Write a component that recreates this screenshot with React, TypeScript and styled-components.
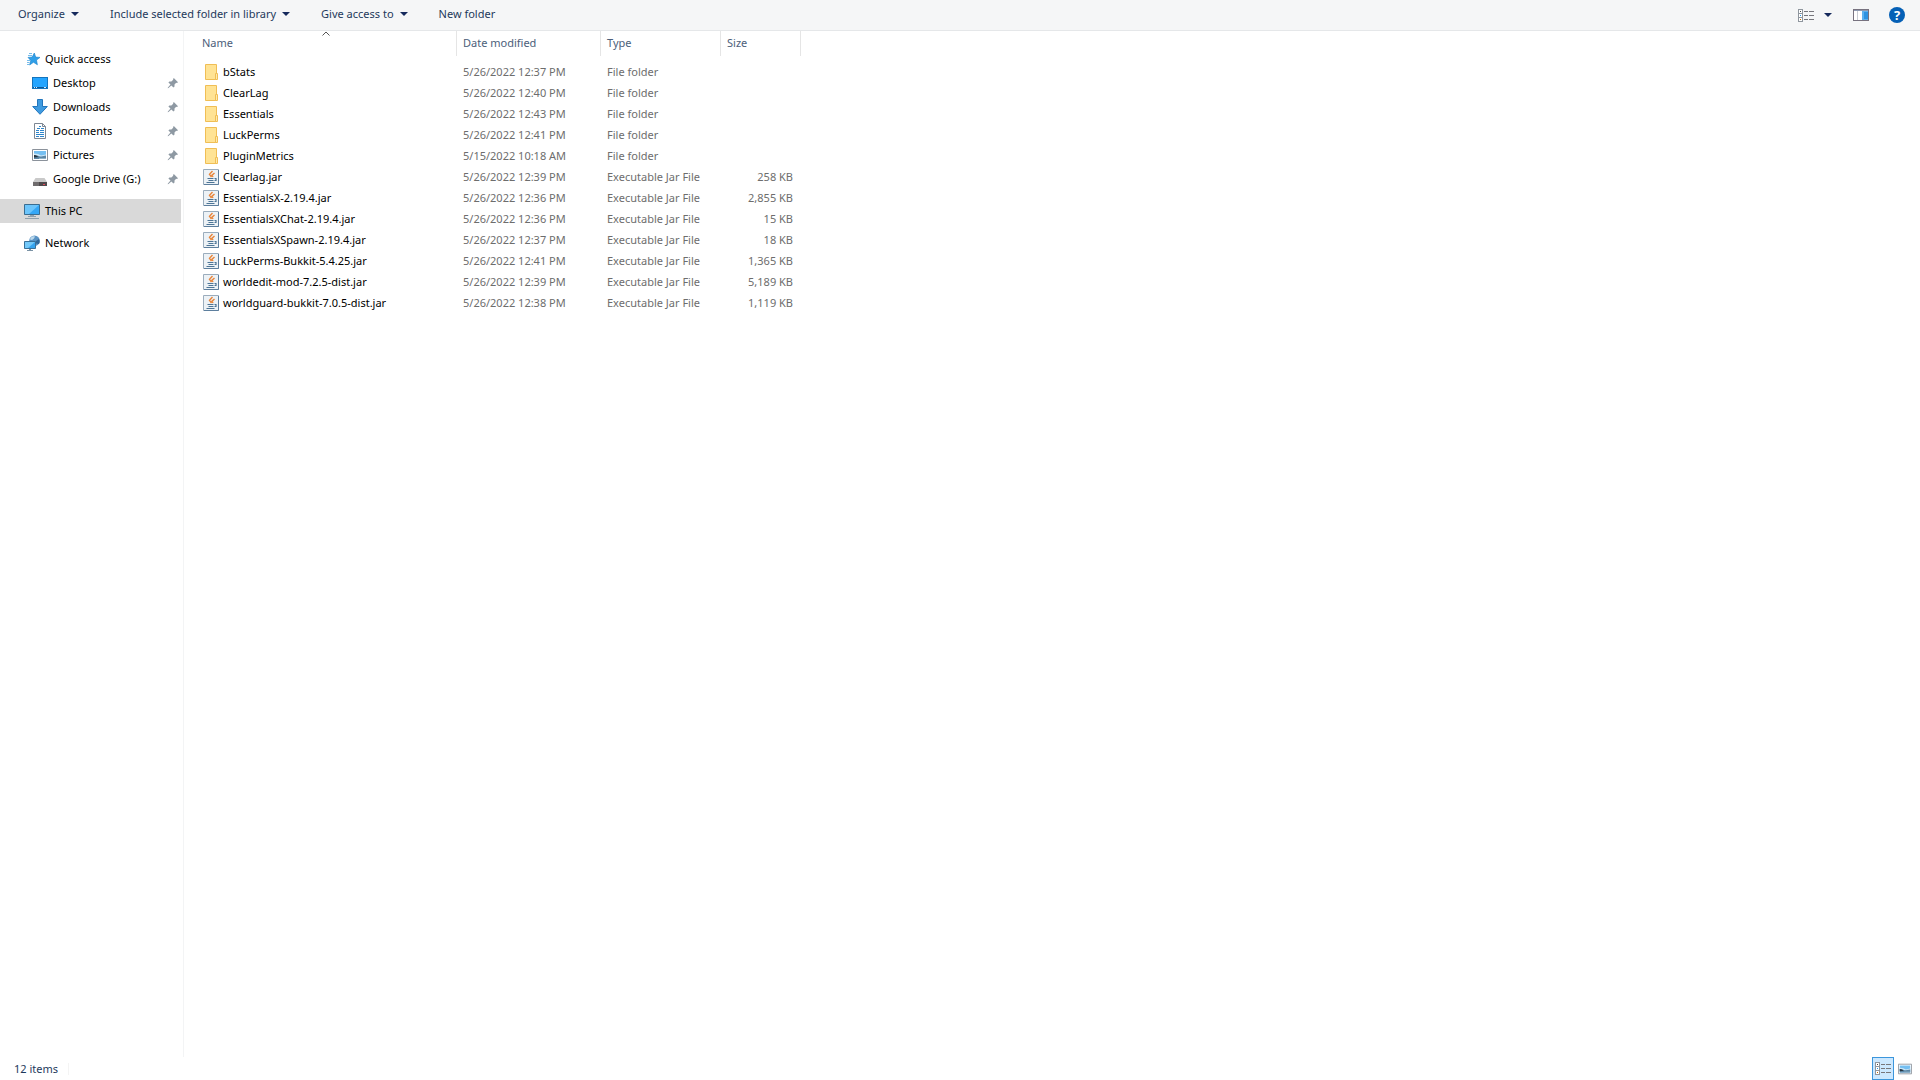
import React from "react";
import styled, { createGlobalStyle } from "styled-components";

const GlobalStyle = createGlobalStyle`
  * { box-sizing: border-box; }
  body {
    margin: 0;
    background: #fff;
    color: #000;
    font-family: "Segoe UI", "Noto Sans", "Open Sans", sans-serif;
    font-size: 11px;
    line-height: 16px;
  }
  button { font: inherit; color: inherit; background: none; border: 0; padding: 0; }
  svg { display: block; flex: none; }
`;

const Window = styled.div`
  min-height: 100vh;
  display: flex;
  flex-direction: column;
`;

const Toolbar = styled.header`
  display: flex;
  align-items: center;
  justify-content: space-between;
  height: 31px;
  padding: 0 15px 0 18px;
  background: #f5f6f7;
  border-bottom: 1px solid #e5e7e9;
  color: #1e395b;
`;

const Commands = styled.div`
  display: flex;
  gap: 31px;
  padding-bottom: 2px;
`;

const ToolButton = styled.button`
  display: flex;
  align-items: center;
  gap: 6px;
  white-space: nowrap;
`;

const ViewTools = styled.div`
  display: flex;
  align-items: center;
  gap: 20px;
`;

const ViewButton = styled(ToolButton)`
  gap: 10px;
  padding-right: 1px;
`;

const HelpButton = styled.button`
  width: 16px;
  height: 16px;
  border-radius: 50%;
  background: #0560b6;
  color: #fff;
  font-size: 13px;
  font-weight: 700;
  text-align: center;
`;

const Main = styled.div`
  flex: 1;
  display: flex;
`;

const Sidebar = styled.nav`
  flex: 0 0 184px;
  display: flex;
  flex-direction: column;
  gap: 8px;
  padding: 16px 2px 16px 0;
  border-right: 1px solid #f3f4f5;
`;

const Group = styled.div`
  display: flex;
  flex-direction: column;
`;

const NavItem = styled.a<{ $nested?: boolean; $selected?: boolean }>`
  display: flex;
  align-items: center;
  gap: 5px;
  height: 24px;
  padding: 0 2px 0 ${(p) => (p.$nested ? 32 : 24)}px;
  background: ${(p) => (p.$selected ? "#d9d9d9" : "transparent")};
  color: #000;
  text-decoration: none;
  white-space: nowrap;
`;

const NavLabel = styled.span`
  flex: 1;
`;

const Content = styled.main`
  flex: 1;
  padding-left: 12px;
`;

const FileTable = styled.table`
  width: 605px;
  table-layout: fixed;
  border-collapse: separate;
  border-spacing: 0;
  color: #6d6d6d;

  thead::after {
    content: "";
    display: block;
    height: 6px;
  }
`;

const HeadCell = styled.th<{ $width: number }>`
  position: relative;
  width: ${(p) => p.$width}px;
  height: 25px;
  padding: 0 6px 1px;
  border-right: 1px solid #e5e5e5;
  color: #4c607a;
  font-weight: 400;
  text-align: left;
`;

const SortMark = styled.svg`
  position: absolute;
  top: 0;
  left: 50%;
  margin-left: -4px;
`;

const Cell = styled.td<{ $right?: boolean }>`
  height: 21px;
  padding: 0 ${(p) => (p.$right ? 8 : 6)}px 1px 6px;
  text-align: ${(p) => (p.$right ? "right" : "left")};
  white-space: nowrap;
`;

const FileName = styled.div`
  display: flex;
  align-items: center;
  gap: 4px;
  padding-left: 1px;
  color: #000;
`;

const StatusBar = styled.footer`
  display: flex;
  align-items: center;
  justify-content: space-between;
  height: 23px;
  padding: 0 4px 0 14px;
  color: #1e395b;
`;

const ItemCount = styled.span`
  padding-right: 10px;
  border-right: 1px solid #f4f4f4;
  line-height: 12px;
`;

const Modes = styled.div`
  display: flex;
`;

const ModeButton = styled.button<{ $active?: boolean }>`
  display: flex;
  align-items: center;
  justify-content: center;
  width: 22px;
  height: 23px;
  background: ${(p) => (p.$active ? "#cce8ff" : "transparent")};
  border: 1px solid ${(p) => (p.$active ? "#3c96dc" : "transparent")};
`;

const Caret = () => (
  <svg width="8" height="4" viewBox="0 0 8 4" aria-hidden="true">
    <path d="M0 0h8L4 4z" fill="#15295c" />
  </svg>
);

const ListIcon = () => (
  <svg width="16" height="13" viewBox="0 0 16 13" shapeRendering="crispEdges" aria-hidden="true">
    <path d="M.5.5h4v12h-4zM.5 4.5h4M.5 8.5h4" fill="#fff" stroke="#8f969e" />
    <path d="M2 2h1v1H2z" fill="#444" />
    <path d="M2 6h1v1H2z" fill="#2296ea" />
    <path d="M2 10h1v1H2z" fill="#c46a00" />
    <path d="M6 2.5h4M11 2.5h5M6 6.5h4M11 6.5h5M6 10.5h4M11 10.5h5" stroke="#77777c" />
  </svg>
);

const PaneIcon = () => (
  <svg width="16" height="12" viewBox="0 0 16 12" shapeRendering="crispEdges" aria-hidden="true">
    <path d="M.5.5h15v11H.5z" fill="#fff" stroke="#77727f" />
    <path d="M1 1h14v1H1z" fill="#8f9bb2" />
    <path d="M4.5 2v9" stroke="#c9cdd4" />
    <path d="M9 2h6v9H9z" fill="#5db1ef" />
    <path d="M11 3h4v7h-4z" fill="#2e93e2" />
  </svg>
);

const StarIcon = () => (
  <svg width="16" height="16" viewBox="0 0 16 16" aria-hidden="true">
    <path d="M10.3 2 11.7 6.1 16 6.4 12.5 9.1 13.4 13.8 9.5 11.3 5.6 14 6.7 9.4 4 6.4 8.2 6z" fill="#2f9fe8" stroke="#1780c9" strokeWidth=".6" />
    <path d="M5 2.5h3M4 4.5h4M3 9.5h3M3 11.5h2.5M3 13.5h2" stroke="#77bcea" />
  </svg>
);

const DesktopIcon = () => (
  <svg width="16" height="16" viewBox="0 0 16 16" shapeRendering="crispEdges" aria-hidden="true">
    <path d="M.5 2.5h15v11H.5z" fill="#24a5ff" stroke="#1474bd" />
    <path d="M1 12h14v1H1z" fill="#0d5795" />
    <path d="M2 12h1v1H2zM4 12h1v1H4zM12 12h2v1h-2z" fill="#d5edff" />
  </svg>
);

const DownloadIcon = () => (
  <svg width="16" height="16" viewBox="0 0 16 16" aria-hidden="true">
    <path d="M5.5.5h5v7h4.8L8 15.3.7 7.5h4.8z" fill="#3f9be0" stroke="#2276bd" />
  </svg>
);

const DocumentIcon = () => (
  <svg width="16" height="16" viewBox="0 0 16 16" aria-hidden="true">
    <path d="M2.5.5h8l3 3v12h-11z" fill="#fff" stroke="#7d8794" />
    <path d="M10.5.5v3h3" fill="none" stroke="#7d8794" />
    <path d="M5 5.5h3M9 5.5h3M4 7.5h3M8 7.5h4M4 9.5h3M8 9.5h4M4 11.5h8M4 13.5h3M8 13.5h4M7 3.5h2" stroke="#2f86cb" />
  </svg>
);

const PictureIcon = ({ width = 16 }: { width?: number }) => (
  <svg width={width} height={width} viewBox="0 0 16 16" aria-hidden="true">
    <path d="M.5 2.5h15v11H.5z" fill="#fff" stroke="#8b929b" />
    <path d="M2 4h12v8H2z" fill="#75bff1" />
    <path d="M2 6.5 6 7l3 1.5 5-1V10H2z" fill="#cfe8f7" />
    <path d="M2 8c3-.5 4.5 1.5 7 1.500l5-1V12H2z" fill="#5b86a5" />
    <path d="M2 8c2 0 3 1 4.500 2L2 10.500z" fill="#26343f" />
    <path d="M7 11h7v1H7z" fill="#8fb1c7" />
  </svg>
);

const DriveIcon = () => (
  <svg width="16" height="16" viewBox="0 0 16 16" aria-hidden="true">
    <path d="M3.5 7h9l2.500 4H1z" fill="#c9c9c9" />
    <path d="M1 11h14v4H1z" fill="#4f4a4c" />
    <path d="M1 11h6v4H1z" fill="#6f6c6d" />
    <path d="M11 13h2v1h-2z" fill="#e34a5b" />
  </svg>
);

const ComputerIcon = () => (
  <svg width="16" height="16" viewBox="0 0 16 16" aria-hidden="true">
    <path d="M.5 1.5h15v10H.5z" fill="#35a7f6" stroke="#3a6d91" />
    <path d="M1 2h14L5 11H1z" fill="#6cc5fb" />
    <path d="M6 12h4v1H6z" fill="#92a3af" />
    <path d="M4 13h8v1H4zM1 15h14v1H1z" fill="#8fa0ac" />
  </svg>
);

const NetworkIcon = () => (
  <svg width="16" height="16" viewBox="0 0 16 16" aria-hidden="true">
    <circle cx="10.5" cy="5.8" r="5.3" fill="#5a93c4" />
    <path d="M6.500 3c1.500-2 3-2 4.500-1.500l-1 2-2 1.500-2-.5z" fill="#bcd9ec" />
    <path d="M12 6l3-2c1 2 .8 3.500 0 5l-3-.5z" fill="#2f6799" />
    <path d="M.5 6.5h11v7H.5z" fill="#36a4ef" stroke="#397098" />
    <path d="M1 7h10L4 13H1z" fill="#73c9fa" />
    <path d="M5 14h2v1H5zM3 15h6v1H3z" fill="#7b93a5" />
  </svg>
);

const PinIcon = () => (
  <svg width="12" height="12" viewBox="0 0 12 12" aria-hidden="true">
    <path d="M6.8 1 11 5.2l-1 .7-.8-.1L7.5 7.6v2l-1 1L4.3 8.4 1.5 11l-.8.2.2-.8 2.600-2.800L1.400 5.500l1-1h2l1.800-1.800-.1-.8z" fill="#8e99a3" />
  </svg>
);

const FolderIcon = () => (
  <svg width="16" height="16" viewBox="0 0 16 16" aria-hidden="true">
    <path d="M2.5.5h11v15h-11z" fill="#ffe394" stroke="#f0be55" />
    <path d="M12.5 9.5h2v6h-2z" fill="#ffe9ab" stroke="#f0be55" />
  </svg>
);

const JarIcon = () => (
  <svg width="16" height="16" viewBox="0 0 16 16" aria-hidden="true">
    <path d="M.5.5h15v15H.5z" fill="#edf2f6" stroke="#9badbd" />
    <path d="M1 15.5h14.5V1" fill="none" stroke="#5d7f9e" />
    <path d="M9.5 2 6.500 5.200 8.500 8M11.500 4 9 6.200 10 8" fill="none" stroke="#e8853a" strokeWidth="1.400" />
    <path d="M4.500 9.500h6M5.500 11.500h5M3.500 13.500h8M11.500 9.500h1.500v2h-1.500" fill="none" stroke="#4d7596" strokeWidth="1.200" />
  </svg>
);

type FileRow = { name: string; date: string; size?: string };

const files: FileRow[] = [
  { name: "bStats", date: "5/26/2022 12:37 PM" },
  { name: "ClearLag", date: "5/26/2022 12:40 PM" },
  { name: "Essentials", date: "5/26/2022 12:43 PM" },
  { name: "LuckPerms", date: "5/26/2022 12:41 PM" },
  { name: "PluginMetrics", date: "5/15/2022 10:18 AM" },
  { name: "Clearlag.jar", date: "5/26/2022 12:39 PM", size: "258 KB" },
  { name: "EssentialsX-2.19.4.jar", date: "5/26/2022 12:36 PM", size: "2,855 KB" },
  { name: "EssentialsXChat-2.19.4.jar", date: "5/26/2022 12:36 PM", size: "15 KB" },
  { name: "EssentialsXSpawn-2.19.4.jar", date: "5/26/2022 12:37 PM", size: "18 KB" },
  { name: "LuckPerms-Bukkit-5.4.25.jar", date: "5/26/2022 12:41 PM", size: "1,365 KB" },
  { name: "worldedit-mod-7.2.5-dist.jar", date: "5/26/2022 12:39 PM", size: "5,189 KB" },
  { name: "worldguard-bukkit-7.0.5-dist.jar", date: "5/26/2022 12:38 PM", size: "1,119 KB" },
];

const pinned = [
  { label: "Desktop", Icon: DesktopIcon },
  { label: "Downloads", Icon: DownloadIcon },
  { label: "Documents", Icon: DocumentIcon },
  { label: "Pictures", Icon: PictureIcon },
  { label: "Google Drive (G:)", Icon: DriveIcon },
];

export default function App() {
  return (
    <Window>
      <GlobalStyle />
      <Toolbar>
        <Commands>
          <ToolButton>Organize <Caret /></ToolButton>
          <ToolButton>Include selected folder in library <Caret /></ToolButton>
          <ToolButton>Give access to <Caret /></ToolButton>
          <ToolButton>New folder</ToolButton>
        </Commands>
        <ViewTools>
          <ViewButton aria-label="Change your view"><ListIcon /><Caret /></ViewButton>
          <ToolButton aria-label="Show the preview pane"><PaneIcon /></ToolButton>
          <HelpButton aria-label="Help">?</HelpButton>
        </ViewTools>
      </Toolbar>
      <Main>
        <Sidebar>
          <Group>
            <NavItem href="#quick-access"><StarIcon /><NavLabel>Quick access</NavLabel></NavItem>
            {pinned.map(({ label, Icon }) => (
              <NavItem key={label} href="#pinned" $nested>
                <Icon />
                <NavLabel>{label}</NavLabel>
                <PinIcon />
              </NavItem>
            ))}
          </Group>
          <NavItem href="#this-pc" $selected><ComputerIcon /><NavLabel>This PC</NavLabel></NavItem>
          <NavItem href="#network"><NetworkIcon /><NavLabel>Network</NavLabel></NavItem>
        </Sidebar>
        <Content>
          <FileTable>
            <thead>
              <tr>
                <HeadCell $width={261} aria-sort="ascending">
                  <button>Name</button>
                  <SortMark width="8" height="5" viewBox="0 0 8 5" aria-hidden="true">
                    <path d="M.5 4.5 4 1l3.5 3.5" fill="none" stroke="#555" />
                  </SortMark>
                </HeadCell>
                <HeadCell $width={144}><button>Date modified</button></HeadCell>
                <HeadCell $width={120}><button>Type</button></HeadCell>
                <HeadCell $width={80}><button>Size</button></HeadCell>
              </tr>
            </thead>
            <tbody>
              {files.map((file) => (
                <tr key={file.name}>
                  <Cell>
                    <FileName>
                      {file.size ? <JarIcon /> : <FolderIcon />}
                      {file.name}
                    </FileName>
                  </Cell>
                  <Cell>{file.date}</Cell>
                  <Cell>{file.size ? "Executable Jar File" : "File folder"}</Cell>
                  <Cell $right>{file.size}</Cell>
                </tr>
              ))}
            </tbody>
          </FileTable>
        </Content>
      </Main>
      <StatusBar>
        <ItemCount>12 items</ItemCount>
        <Modes>
          <ModeButton $active aria-label="Details view"><ListIcon /></ModeButton>
          <ModeButton aria-label="Large thumbnails view"><PictureIcon width={14} /></ModeButton>
        </Modes>
      </StatusBar>
    </Window>
  );
}
